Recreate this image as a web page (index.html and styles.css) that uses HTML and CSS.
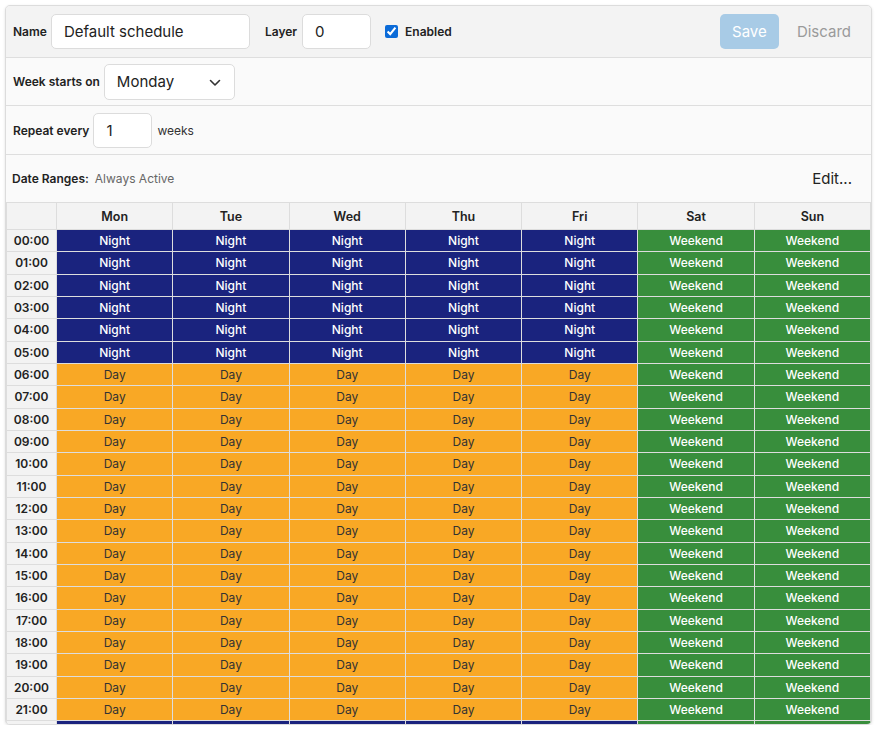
FILE: index.html
```html
<!DOCTYPE html>
<html>
<head>
<meta charset="utf-8">
<link rel="stylesheet" href="styles.css">
</head>
<body>
<div class="card">
  <div class="bar bar-top">
    <label class="lbl">Name</label>
    <input class="field name-field" type="text" value="Default schedule">
    <label class="lbl lbl-gap">Layer</label>
    <input class="field layer-field" type="text" value="0">
    <label class="check"><input type="checkbox" checked> <span class="lbl">Enabled</span></label>
    <div class="spacer"></div>
    <button class="btn btn-save" disabled>Save</button>
    <button class="btn btn-discard">Discard</button>
  </div>
  <div class="bar bar-week">
    <label class="lbl">Week starts on</label>
    <div class="select-wrap">
      <select class="field select-field"><option>Monday</option></select>
      <svg class="chev" width="12" height="8" viewBox="0 0 12 8"><path d="M1.5 1.5 L6 6 L10.5 1.5" fill="none" stroke="#333" stroke-width="1.6" stroke-linecap="round" stroke-linejoin="round"/></svg>
    </div>
  </div>
  <div class="bar bar-repeat">
    <label class="lbl">Repeat every</label>
    <input class="field repeat-field" type="text" value="1">
    <span class="unit">weeks</span>
  </div>
  <div class="bar bar-dates">
    <span class="lbl">Date Ranges:</span>
    <span class="muted">Always Active</span>
    <div class="spacer"></div>
    <button class="btn btn-edit">Edit...</button>
  </div>
  <div class="grid-wrap">
    <table class="sched">
      <colgroup><col class="c-time"><col><col><col><col><col><col><col></colgroup>
      <thead>
        <tr><th></th><th>Mon</th><th>Tue</th><th>Wed</th><th>Thu</th><th>Fri</th><th>Sat</th><th>Sun</th></tr>
      </thead>
      <tbody>
        <tr><th>00:00</th><td class="n">Night</td><td class="n">Night</td><td class="n">Night</td><td class="n">Night</td><td class="n">Night</td><td class="w">Weekend</td><td class="w">Weekend</td></tr>
        <tr><th>01:00</th><td class="n">Night</td><td class="n">Night</td><td class="n">Night</td><td class="n">Night</td><td class="n">Night</td><td class="w">Weekend</td><td class="w">Weekend</td></tr>
        <tr><th>02:00</th><td class="n">Night</td><td class="n">Night</td><td class="n">Night</td><td class="n">Night</td><td class="n">Night</td><td class="w">Weekend</td><td class="w">Weekend</td></tr>
        <tr><th>03:00</th><td class="n">Night</td><td class="n">Night</td><td class="n">Night</td><td class="n">Night</td><td class="n">Night</td><td class="w">Weekend</td><td class="w">Weekend</td></tr>
        <tr><th>04:00</th><td class="n">Night</td><td class="n">Night</td><td class="n">Night</td><td class="n">Night</td><td class="n">Night</td><td class="w">Weekend</td><td class="w">Weekend</td></tr>
        <tr><th>05:00</th><td class="n">Night</td><td class="n">Night</td><td class="n">Night</td><td class="n">Night</td><td class="n">Night</td><td class="w">Weekend</td><td class="w">Weekend</td></tr>
        <tr><th>06:00</th><td class="d">Day</td><td class="d">Day</td><td class="d">Day</td><td class="d">Day</td><td class="d">Day</td><td class="w">Weekend</td><td class="w">Weekend</td></tr>
        <tr><th>07:00</th><td class="d">Day</td><td class="d">Day</td><td class="d">Day</td><td class="d">Day</td><td class="d">Day</td><td class="w">Weekend</td><td class="w">Weekend</td></tr>
        <tr><th>08:00</th><td class="d">Day</td><td class="d">Day</td><td class="d">Day</td><td class="d">Day</td><td class="d">Day</td><td class="w">Weekend</td><td class="w">Weekend</td></tr>
        <tr><th>09:00</th><td class="d">Day</td><td class="d">Day</td><td class="d">Day</td><td class="d">Day</td><td class="d">Day</td><td class="w">Weekend</td><td class="w">Weekend</td></tr>
        <tr><th>10:00</th><td class="d">Day</td><td class="d">Day</td><td class="d">Day</td><td class="d">Day</td><td class="d">Day</td><td class="w">Weekend</td><td class="w">Weekend</td></tr>
        <tr><th>11:00</th><td class="d">Day</td><td class="d">Day</td><td class="d">Day</td><td class="d">Day</td><td class="d">Day</td><td class="w">Weekend</td><td class="w">Weekend</td></tr>
        <tr><th>12:00</th><td class="d">Day</td><td class="d">Day</td><td class="d">Day</td><td class="d">Day</td><td class="d">Day</td><td class="w">Weekend</td><td class="w">Weekend</td></tr>
        <tr><th>13:00</th><td class="d">Day</td><td class="d">Day</td><td class="d">Day</td><td class="d">Day</td><td class="d">Day</td><td class="w">Weekend</td><td class="w">Weekend</td></tr>
        <tr><th>14:00</th><td class="d">Day</td><td class="d">Day</td><td class="d">Day</td><td class="d">Day</td><td class="d">Day</td><td class="w">Weekend</td><td class="w">Weekend</td></tr>
        <tr><th>15:00</th><td class="d">Day</td><td class="d">Day</td><td class="d">Day</td><td class="d">Day</td><td class="d">Day</td><td class="w">Weekend</td><td class="w">Weekend</td></tr>
        <tr><th>16:00</th><td class="d">Day</td><td class="d">Day</td><td class="d">Day</td><td class="d">Day</td><td class="d">Day</td><td class="w">Weekend</td><td class="w">Weekend</td></tr>
        <tr><th>17:00</th><td class="d">Day</td><td class="d">Day</td><td class="d">Day</td><td class="d">Day</td><td class="d">Day</td><td class="w">Weekend</td><td class="w">Weekend</td></tr>
        <tr><th>18:00</th><td class="d">Day</td><td class="d">Day</td><td class="d">Day</td><td class="d">Day</td><td class="d">Day</td><td class="w">Weekend</td><td class="w">Weekend</td></tr>
        <tr><th>19:00</th><td class="d">Day</td><td class="d">Day</td><td class="d">Day</td><td class="d">Day</td><td class="d">Day</td><td class="w">Weekend</td><td class="w">Weekend</td></tr>
        <tr><th>20:00</th><td class="d">Day</td><td class="d">Day</td><td class="d">Day</td><td class="d">Day</td><td class="d">Day</td><td class="w">Weekend</td><td class="w">Weekend</td></tr>
        <tr><th>21:00</th><td class="d">Day</td><td class="d">Day</td><td class="d">Day</td><td class="d">Day</td><td class="d">Day</td><td class="w">Weekend</td><td class="w">Weekend</td></tr>
        <tr><th>22:00</th><td class="n">Night</td><td class="n">Night</td><td class="n">Night</td><td class="n">Night</td><td class="n">Night</td><td class="w">Weekend</td><td class="w">Weekend</td></tr>
        <tr><th>23:00</th><td class="n">Night</td><td class="n">Night</td><td class="n">Night</td><td class="n">Night</td><td class="n">Night</td><td class="w">Weekend</td><td class="w">Weekend</td></tr>
      </tbody>
    </table>
  </div>
</div>
</body>
</html>
```
FILE: styles.css
```css
* { box-sizing: border-box; }
html, body { margin: 0; padding: 0; background: #ffffff; }
body {
  padding: 5px 5px 0 5px;
  font-family: Inter, "Noto Sans", sans-serif;
  color: #222;
}
.card {
  height: 720px;
  border: 1px solid #dcdcdc;
  border-radius: 5px;
  background: #fafafa;
  display: flex;
  flex-direction: column;
  overflow: hidden;
  box-shadow: 0 1px 3px rgba(0,0,0,0.12);
}
.bar {
  display: flex;
  align-items: center;
  padding: 0 7px;
  border-bottom: 1px solid #dedede;
  flex: none;
}
.bar-top { background: #f3f3f3; height: 52px; }
.bar-week { height: 48px; }
.bar-repeat { height: 49px; }
.bar-dates { height: 47px; padding-left: 6px; border-bottom: none; }
.lbl {
  font-size: 12px;
  font-weight: 600;
  color: #222;
  white-space: nowrap;
}
.lbl-gap { margin-left: 15px; }
.field {
  font-family: Inter, "Noto Sans", sans-serif;
  font-size: 15px;
  color: #222;
  background: #fff;
  border: 1px solid #dcdcdc;
  border-radius: 5px;
  height: 35px;
  padding: 0 12px;
  margin-left: 4px;
  outline: none;
}
.name-field { width: 199px; }
.layer-field { width: 69px; margin-left: 5px; }
.repeat-field { width: 59px; margin-left: 4px; }
.check {
  display: flex;
  align-items: center;
  margin-left: 14px;
}
.check input {
  width: 13px;
  height: 13px;
  margin: 0 7px 0 0;
  accent-color: #0b6bd8;
}
.spacer { flex: 1; }
.btn {
  font-family: Inter, "Noto Sans", sans-serif;
  font-size: 15px;
  height: 35px;
  border: none;
  border-radius: 5px;
  padding: 0 12px;
  background: transparent;
}
.btn-save {
  background: #a8cbe6;
  color: #ffffff;
  width: 59px;
  padding: 0;
}
.btn-discard { color: #9a9a9a; margin-left: 6px; padding: 0 13px 0 12px; }
.btn-edit { color: #222; font-size: 15px; padding: 0 12px; margin-right: 0; }
.select-wrap { position: relative; margin-left: 4px; }
.select-field {
  appearance: none;
  -webkit-appearance: none;
  width: 131px;
  height: 36px;
  margin-left: 0;
  padding: 0 12px;
}
.chev { position: absolute; right: 14px; top: 15px; pointer-events: none; }
.unit { font-size: 12px; color: #333; margin-left: 5px; }
.muted { font-size: 12px; color: #666; margin-left: 6px; }
.grid-wrap { flex: 1; overflow: hidden; }
.sched {
  width: 100%;
  table-layout: fixed;
  border-collapse: collapse;
  font-size: 12px;
}
.c-time { width: 50px; }
.sched th, .sched td {
  border: 1px solid #dddddd;
  text-align: center;
  padding: 0;
  white-space: nowrap;
}
.sched thead th {
  height: 27px;
  background: #f3f3f3;
  font-weight: 600;
  font-size: 12.5px;
  color: #222;
}
.sched tbody th {
  background: #f3f3f3;
  font-weight: 600;
  color: #222;
  height: 22.33px;
}
.sched td { height: 22.33px; }
.n { background: #1a237e; color: #ffffff; font-weight: 500; }
.d { background: #f9a825; color: #333; font-weight: 400; }
.w { background: #388e3c; color: #ffffff; font-weight: 500; }
```
